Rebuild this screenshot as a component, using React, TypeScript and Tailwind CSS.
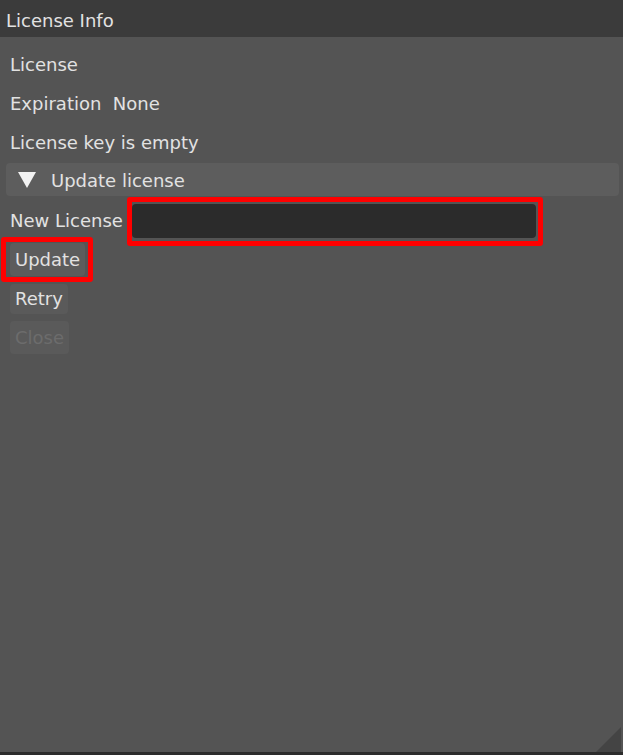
export default function App() {
  return (
    <div
      className="w-[623px] h-[755px] flex flex-col bg-[#545454] text-[#e2e2e2] text-[18px] leading-[22px] overflow-hidden relative"
      style={{ fontFamily: '"DejaVu Sans", sans-serif' }}
    >
      {/* title bar */}
      <div className="h-[37px] shrink-0 bg-[#3b3b3b] flex items-center pl-[6px] pt-[4px]">
        License Info
      </div>

      <div className="flex-1 flex flex-col pt-[8px] px-[6px]">
        <div className="h-[39px] flex items-center pl-[4px]">License</div>
        <div className="h-[39px] flex items-center pl-[4px]">Expiration&nbsp; None</div>
        <div className="h-[39px] flex items-center pl-[4px]">License key is empty</div>

        {/* collapsing header */}
        <div className="h-[39px] pt-[1px]">
          <div className="h-[33px] w-[613px] bg-[#5d5d5d] rounded-[4px] flex items-center pl-[12px] pt-[3px] gap-[15px]">
            <svg className="-mt-[3px]" width="18" height="16" viewBox="0 0 18 16">
              <polygon points="0,0 18,0 9,16" fill="#f2f2f2" />
            </svg>
            <span>Update license</span>
          </div>
        </div>

        <div className="h-[39px] flex items-center pl-[4px] gap-[9px]">
          <span>New License</span>
          <div className="relative">
            <div className="w-[404px] h-[34px] bg-[#2b2b2b] rounded-[4px]" />
            <div className="absolute -left-[5px] -top-[7px] -right-[7px] -bottom-[8px] border-[5px] border-[#ff0000] rounded-[3px]" />
          </div>
        </div>

        <div className="h-[39px] flex items-center pl-[4px]">
          <div className="relative">
            <button className="h-[33px] px-[5px] bg-[#5c5c5c] rounded-[4px]">Update</button>
            <div className="absolute -left-[9px] -top-[6px] -right-[8px] -bottom-[6px] border-[5px] border-[#ff0000] rounded-[3px]" />
          </div>
        </div>
        <div className="h-[39px] flex items-center pl-[4px]">
          <button className="h-[30px] px-[5px] bg-[#5a5a5a] rounded-[4px]">Retry</button>
        </div>
        <div className="h-[39px] flex items-center pl-[4px]">
          <button className="h-[33px] px-[5px] bg-[#5a5a5a] rounded-[4px] text-[#6c6c6c]">Close</button>
        </div>
      </div>

      {/* resize grip */}
      <svg className="absolute right-[2px] bottom-[3px]" width="25" height="25" viewBox="0 0 25 25">
        <polygon points="25,0 25,25 0,25" fill="#444444" />
      </svg>
      <div className="h-[3px] shrink-0 bg-[#2c2c2c]" />
    </div>
  );
}
